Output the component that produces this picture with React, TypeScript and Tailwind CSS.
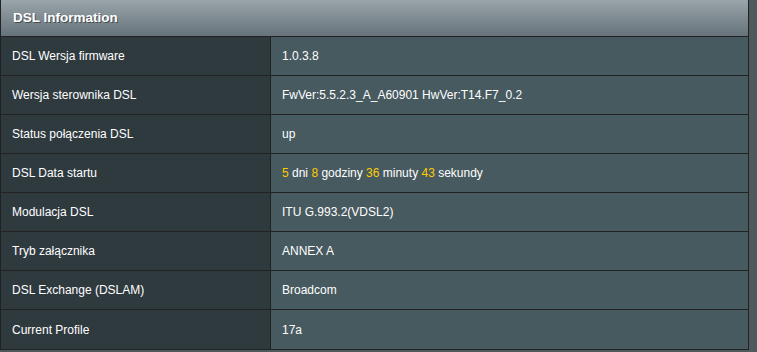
import React from "react";

type Row = { label: string; value: React.ReactNode };

const Num = ({ children }: { children: React.ReactNode }) => (
  <span className="text-[#FFCC00]">{children}</span>
);

const rows: Row[] = [
  { label: "DSL Wersja firmware", value: "1.0.3.8" },
  { label: "Wersja sterownika DSL", value: "FwVer:5.5.2.3_A_A60901 HwVer:T14.F7_0.2" },
  { label: "Status połączenia DSL", value: "up" },
  {
    label: "DSL Data startu",
    value: (
      <>
        <Num>5</Num> dni <Num>8</Num> godziny <Num>36</Num> minuty <Num>43</Num> sekundy
      </>
    ),
  },
  { label: "Modulacja DSL", value: "ITU G.993.2(VDSL2)" },
  { label: "Tryb załącznika", value: "ANNEX A" },
  { label: "DSL Exchange (DSLAM)", value: "Broadcom" },
  { label: "Current Profile", value: "17a" },
];

export default function App() {
  return (
    <div className="w-[757px] h-[352px] bg-[#4D595D] overflow-hidden font-['Liberation_Sans',Arial,sans-serif] text-[12px] text-white">
      <div className="w-[749px] border-x border-b border-[#222]">
        {/* header */}
        <div className="h-[37px] flex items-center pl-[12px] border-b border-[#222] bg-gradient-to-b from-[#9AA5AA] to-[#66737A]">
          <span className="font-bold text-[13.5px] text-white [text-shadow:1px_1px_0_rgba(0,0,0,0.45)]">
            DSL Information
          </span>
        </div>
        {rows.map((r, i) => (
          <div
            key={r.label}
            className={`flex h-[39px] ${i < rows.length - 1 ? "border-b border-[#222]" : "h-[38px]"}`}
          >
            <div className="w-[270px] shrink-0 bg-[#2F3A3F] border-r border-[#222] flex items-center pl-[11px]">
              <span>{r.label}</span>
            </div>
            <div className="flex-1 bg-[#475A5F] flex items-center pl-[11px]">
              <span>{r.value}</span>
            </div>
          </div>
        ))}
      </div>
    </div>
  );
}
